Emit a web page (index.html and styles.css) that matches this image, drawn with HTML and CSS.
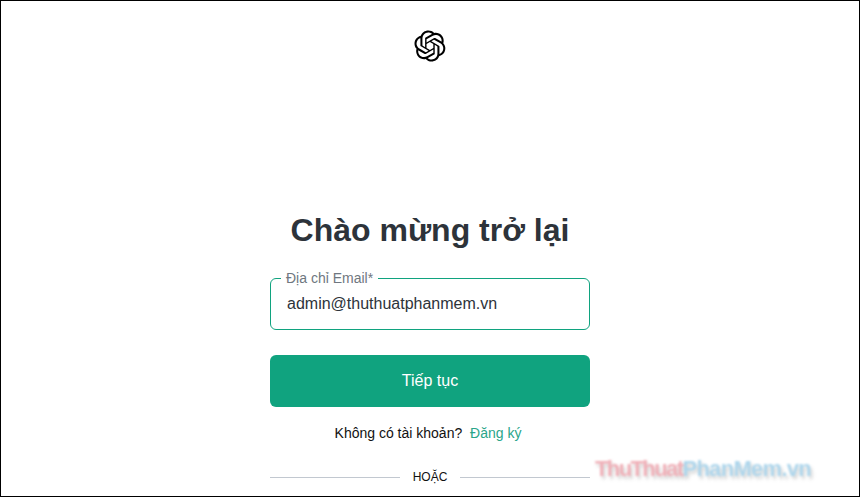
FILE: index.html
```html
<!DOCTYPE html>
<html>

	<head>
		<meta charset="UTF-8">
		<title>Đăng nhập</title>
		<link rel="stylesheet" href="styles.css">
	</head>

	<body>
		<div class="page">
			<header class="logo">
				<svg class="logo-icon" viewBox="0 0 41 41" fill="currentColor">
					<path d="M37.5324 16.8707C37.9808 15.5241 38.1363 14.0974 37.9886 12.6859C37.8409 11.2744 37.3934 9.91076 36.676 8.68622C35.6126 6.83404 33.9882 5.3676 32.0373 4.4985C30.0864 3.62941 27.9098 3.40259 25.8215 3.85078C24.8796 2.7893 23.7219 1.94125 22.4257 1.36341C21.1295 0.785575 19.7249 0.491269 18.3058 0.500197C16.1708 0.495044 14.0893 1.16803 12.3614 2.42214C10.6335 3.67624 9.34853 5.44666 8.6917 7.47815C7.30085 7.76286 5.98686 8.3414 4.8377 9.17505C3.68854 10.0087 2.73073 11.0782 2.02839 12.312C0.956464 14.1591 0.498905 16.2988 0.721698 18.4228C0.944492 20.5467 1.83612 22.5449 3.268 24.1293C2.81966 25.4759 2.66413 26.9026 2.81182 28.3141C2.95951 29.7256 3.40701 31.0892 4.12437 32.3138C5.18791 34.1659 6.8123 35.6322 8.76321 36.5013C10.7141 37.3704 12.8907 37.5973 14.9789 37.1492C15.9208 38.2107 17.0786 39.0587 18.3747 39.6366C19.6709 40.2144 21.0755 40.5087 22.4946 40.4998C24.6307 40.5054 26.7133 39.8321 28.4418 38.5772C30.1704 37.3223 31.4556 35.5506 32.1119 33.5179C33.5027 33.2332 34.8167 32.6547 35.9659 31.821C37.115 30.9874 38.0728 29.9178 38.7752 28.684C39.8458 26.8371 40.3023 24.6979 40.0789 22.5748C39.8556 20.4517 38.9639 18.4544 37.5324 16.8707ZM22.4978 37.8849C20.7443 37.8874 19.0459 37.2733 17.6994 36.1501C17.7601 36.117 17.8666 36.0586 17.936 36.0161L25.9004 31.4156C26.1003 31.3019 26.2663 31.137 26.3813 30.9378C26.4964 30.7386 26.5563 30.5124 26.5549 30.2825V19.0542L29.9213 20.998C29.9389 21.0068 29.9541 21.0198 29.9656 21.0359C29.977 21.052 29.9842 21.0707 29.9867 21.0902V30.3889C29.9842 32.375 29.1946 34.2791 27.7909 35.6841C26.3872 37.0892 24.4838 37.8806 22.4978 37.8849ZM6.39227 31.0064C5.51397 29.4888 5.19742 27.7107 5.49804 25.9832C5.55718 26.0187 5.66048 26.0818 5.73461 26.1244L13.699 30.7248C13.8975 30.8408 14.1233 30.902 14.3532 30.902C14.583 30.902 14.8088 30.8408 15.0073 30.7248L24.731 25.1103V28.9979C24.7321 29.0177 24.7283 29.0376 24.7199 29.0556C24.7115 29.0736 24.6988 29.0893 24.6829 29.1012L16.6317 33.7497C14.9096 34.7416 12.8643 35.0097 10.9447 34.4954C9.02506 33.9811 7.38785 32.7263 6.39227 31.0064ZM4.29707 13.6194C5.17156 12.0998 6.55279 10.9364 8.19885 10.3327C8.19885 10.4013 8.19491 10.5228 8.19491 10.6071V19.808C8.19351 20.0378 8.25334 20.2638 8.36823 20.4629C8.48312 20.6619 8.64893 20.8267 8.84863 20.9404L18.5723 26.5542L15.206 28.4979C15.1894 28.5089 15.1703 28.5155 15.1505 28.5173C15.1307 28.5191 15.1107 28.516 15.0924 28.5082L7.04046 23.8557C5.32135 22.8601 4.06716 21.2235 3.55289 19.3046C3.03862 17.3858 3.30624 15.3413 4.29707 13.6194ZM31.955 20.0556L22.2312 14.4411L25.5976 12.4981C25.6142 12.4872 25.6333 12.4805 25.6531 12.4787C25.6729 12.4769 25.6928 12.4801 25.7111 12.4879L33.7631 17.1364C34.9967 17.849 36.0017 18.8982 36.6606 20.1613C37.3194 21.4244 37.6047 22.849 37.4832 24.2684C37.3617 25.6878 36.8382 27.0432 35.9743 28.1759C35.1103 29.3086 33.9415 30.1717 32.6047 30.6641C32.6047 30.5947 32.6047 30.4733 32.6047 30.3889V21.188C32.6066 20.9586 32.5474 20.7328 32.4332 20.5338C32.319 20.3348 32.154 20.1698 31.955 20.0556ZM35.3055 15.0128C35.2464 14.9765 35.1431 14.9142 35.069 14.8717L27.1045 10.2712C26.906 10.1554 26.6803 10.0943 26.4504 10.0943C26.2206 10.0943 25.9948 10.1554 25.7963 10.2712L16.0726 15.8858V11.9982C16.0715 11.9783 16.0753 11.9585 16.0837 11.9405C16.0921 11.9225 16.1048 11.9068 16.1207 11.8949L24.1719 7.25025C25.4053 6.53903 26.8158 6.19376 28.2383 6.25482C29.6608 6.31589 31.0364 6.78077 32.2044 7.59508C33.3723 8.40939 34.2842 9.53945 34.8334 10.8531C35.3826 12.1667 35.5464 13.6095 35.3055 15.0128ZM14.2424 21.9419L10.8752 19.9981C10.8576 19.9893 10.8423 19.9763 10.8309 19.9602C10.8195 19.9441 10.8122 19.9254 10.8098 19.9058V10.6071C10.8107 9.18295 11.2173 7.78848 11.9819 6.58696C12.7466 5.38544 13.8377 4.42659 15.1275 3.82264C16.4173 3.21869 17.8524 2.99464 19.2649 3.1767C20.6775 3.35876 22.0089 3.93941 23.1034 4.85067C23.0427 4.88379 22.937 4.94215 22.8668 4.98473L14.9024 9.58517C14.7025 9.69878 14.5366 9.86356 14.4215 10.0626C14.3065 10.2616 14.2466 10.4877 14.2479 10.7175L14.2424 21.9419ZM16.071 17.9991L20.4018 15.4978L24.7325 17.9975V22.9985L20.4018 25.4983L16.071 22.9985V17.9991Z"/>
				</svg>
			</header>

			<main class="login">
				<h1 class="title">Chào mừng trở lại</h1>

				<div class="field">
					<label class="field-label">Địa chỉ Email*</label>
					<div class="field-input">admin@thuthuatphanmem.vn</div>
				</div>

				<button class="btn-next">Tiếp tục</button>

				<p class="signup">Không có tài khoản? <a href="#">Đăng ký</a></p>

				<div class="divider">
					<span>HOẶC</span>
				</div>
			</main>

			<div class="watermark"><span class="wm-red">ThuThuat</span><span class="wm-blue">PhanMem.vn</span></div>
		</div>
	</body>

</html>
```

FILE: styles.css
```css
html,
body,
h1,
p {
	margin: 0;
	padding: 0;
}

body {
	background-color: #fff;
	font-family: "Liberation Sans", Arial, sans-serif;
	overflow: hidden;
}

.page {
	position: relative;
	box-sizing: border-box;
	width: 860px;
	height: 497px;
	border: 1px solid #000;
	display: flex;
	flex-direction: column;
	align-items: center;
	overflow: hidden;
}

.logo {
	height: 32px;
	padding-top: 29px;
}

.logo-icon {
	display: block;
	width: 32px;
	height: 32px;
	color: #000;
}

.login {
	width: 320px;
	padding-top: 148px;
}

.title {
	font-size: 32px;
	line-height: 40px;
	font-weight: 700;
	color: #2d333a;
	text-align: center;
}

.field {
	position: relative;
	box-sizing: border-box;
	height: 52px;
	margin-top: 28px;
	padding: 0 16px;
	border: 1px solid #10a37f;
	border-radius: 6px;
	display: flex;
	align-items: center;
}

.field-label {
	position: absolute;
	left: 10px;
	top: -9px;
	padding: 0 5px;
	background-color: #fff;
	font-size: 14px;
	line-height: 16px;
	color: #6f7780;
}

.field-input {
	font-size: 16px;
	color: #2d333a;
}

.btn-next {
	display: block;
	width: 100%;
	height: 52px;
	margin-top: 25px;
	border: 0;
	border-radius: 6px;
	background-color: #10a37f;
	color: #fff;
	font-family: inherit;
	font-size: 16px;
}

.signup {
	margin-top: 17px;
	font-size: 14px;
	line-height: 18px;
	text-align: center;
	color: #111;
}

.signup a {
	margin-left: 4px;
	margin-right: 4px;
	color: #2aa58a;
	text-decoration: none;
}

.divider {
	display: flex;
	align-items: center;
	margin-top: 28px;
	font-size: 12px;
	line-height: 14px;
	color: #111;
}

.divider::before,
.divider::after {
	content: "";
	flex: 1;
	height: 1px;
	background-color: #c2c8d0;
}

.divider span {
	padding: 0 13px;
}

/* watermark lies over the corner of the page */
.watermark {
	position: absolute;
	left: 594px;
	top: 454px;
	font-size: 22px;
	line-height: 28px;
	font-weight: 700;
	white-space: nowrap;
	filter: blur(1.2px);
	text-shadow: 2px 3px 3px rgba(120, 120, 120, .3);
}

.wm-red {
	letter-spacing: -1.6px;
	color: #f0b0b8;
}

.wm-blue {
	letter-spacing: -.7px;
	color: #aed6ec;
}
```
